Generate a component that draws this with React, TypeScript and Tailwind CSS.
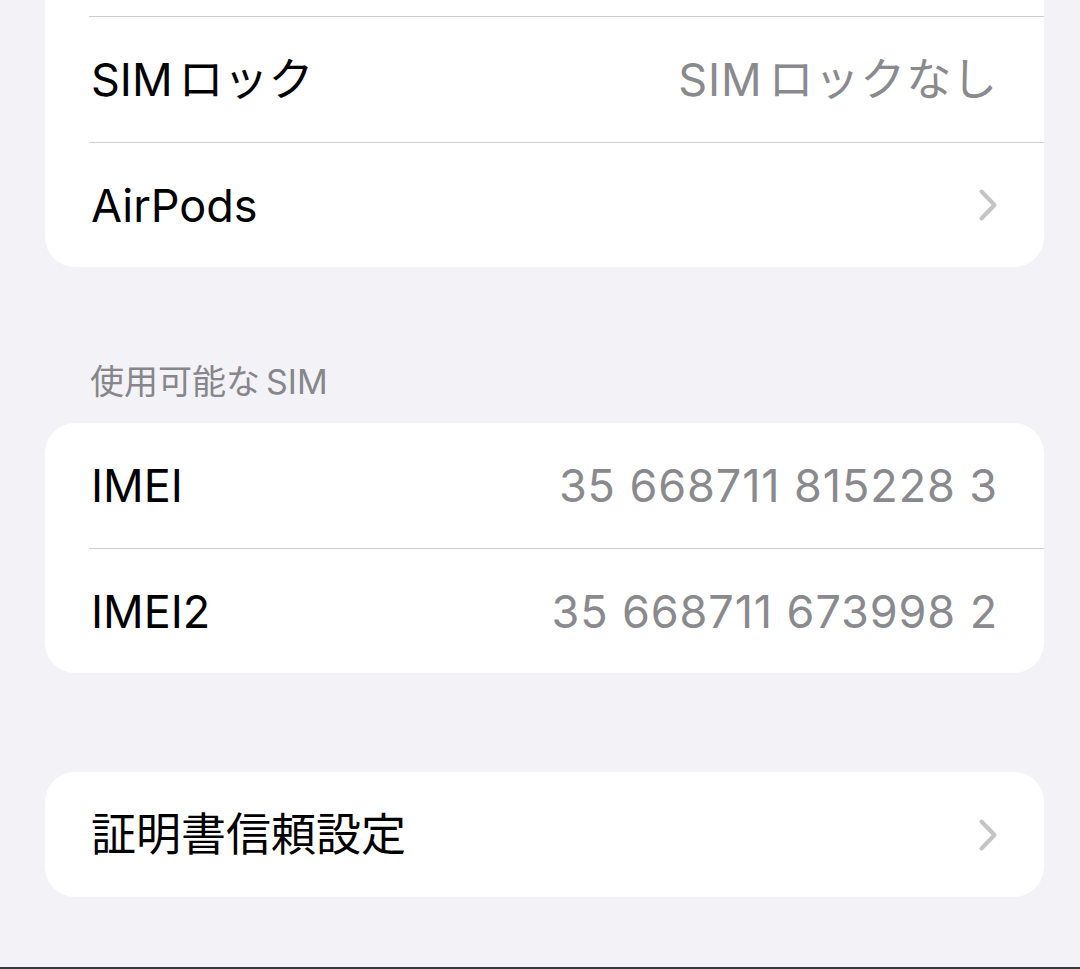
import type { ReactNode } from "react";

const font = "font-['Inter','Noto_Sans_CJK_JP',sans-serif]";

function Chevron() {
  return (
    <svg width="20" height="34" viewBox="0 0 20 34" fill="none" className="shrink-0">
      <path
        d="M3.5 3.5 L16.5 17 L3.5 30.5"
        stroke="#c4c4c7"
        strokeWidth="4"
        strokeLinecap="round"
        strokeLinejoin="round"
      />
    </svg>
  );
}

function Row({
  label,
  value,
  chevron,
  h = "h-[125px]",
}: {
  label: ReactNode;
  value?: ReactNode;
  chevron?: boolean;
  h?: string;
}) {
  return (
    <div className={`flex items-center justify-between pl-[46px] pr-[46px] ${h}`}>
      <span className="text-[45px] leading-none text-black">{label}</span>
      {value && <span className="text-[45px] leading-none text-[#8a8a8e] tracking-[0.02em]">{value}</span>}
      {chevron && <Chevron />}
    </div>
  );
}

function Separator() {
  return <div className="ml-[44px] h-px bg-[#cfcfd3]" />;
}

export default function App() {
  return (
    <div className={`flex h-[969px] flex-col overflow-hidden bg-[#f2f2f7] ${font}`}>
      <div className="flex flex-1 flex-col pl-[45px] pr-[36px]">
        <section className="rounded-b-[30px] bg-white">
          <div className="h-[16px]" />
          <Separator />
          <Row
            label={
              <>
                SIM<span className="ml-[6px]">ロック</span>
              </>
            }
            value={
              <>
                SIM<span className="ml-[6px]">ロックなし</span>
              </>
            }
          />
          <Separator />
          <Row label="AirPods" chevron h="h-[124px]" />
        </section>

        <h2 className="pl-[45px] pt-[95px] pb-[21px] text-[34px] leading-[40px] text-[#86868b]">
          使用可能な<span className="ml-[6px]">SIM</span>
        </h2>

        <section className="rounded-[30px] bg-white">
          <Row label="IMEI" value="35 668711 815228 3" />
          <Separator />
          <Row label="IMEI2" value="35 668711 673998 2" h="h-[124px]" />
        </section>

        <section className="mt-[99px] rounded-[30px] bg-white">
          <Row label="証明書信頼設定" chevron />
        </section>
      </div>
      <div className="h-[2px] bg-[#3a3a3c]" />
    </div>
  );
}
